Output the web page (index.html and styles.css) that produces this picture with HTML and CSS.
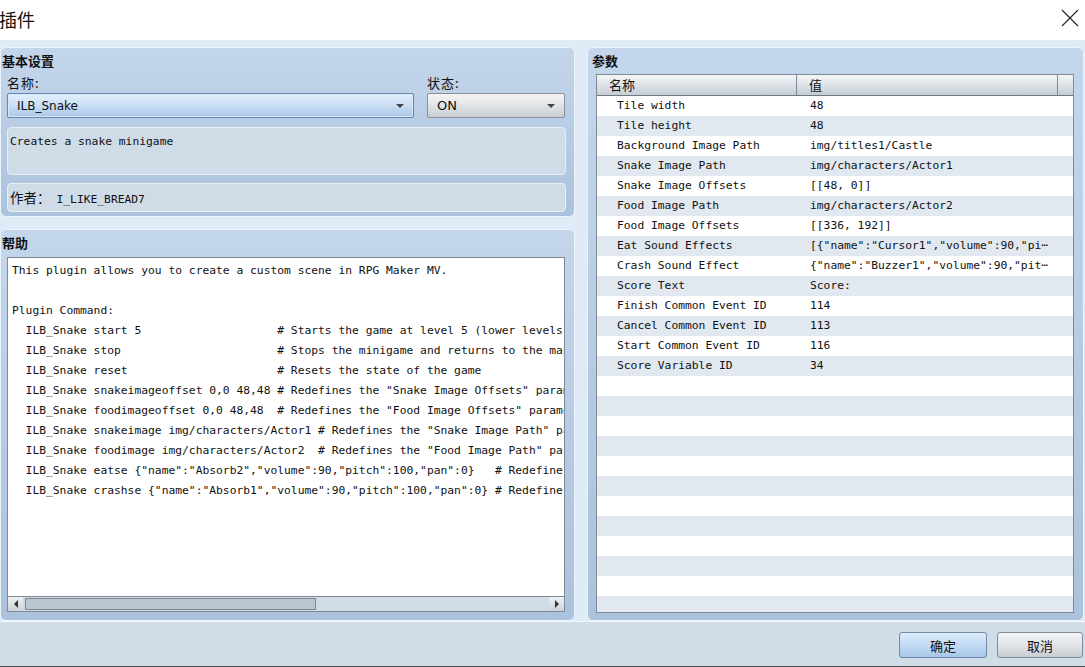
FILE: index.html
```html
<!DOCTYPE html>
<html lang="zh">
<head>
<meta charset="utf-8">
<title>插件</title>
<link rel="stylesheet" href="styles.css">
</head>
<body>
<div class="window">
  <div class="titlebar">
    <span class="title">插件</span>
    <svg class="close" width="18" height="18" viewBox="0 0 18 18"><path d="M1 1 L17 17 M17 1 L1 17" stroke="#222" stroke-width="1.1" fill="none"/></svg>
  </div>
  <div class="main">
    <div class="leftcol">
      <section class="panel basic">
        <div class="ptitle">基本设置</div>
        <div class="fields">
          <div class="field namefield">
            <div class="label">名称:</div>
            <div class="select blue"><span>ILB_Snake</span><i class="arrow"></i></div>
          </div>
          <div class="field statefield">
            <div class="label">状态:</div>
            <div class="select gray"><span>ON</span><i class="arrow"></i></div>
          </div>
        </div>
        <div class="box desc">Creates a snake minigame</div>
        <div class="box author"><span class="cjk">作者：</span>I_LIKE_BREAD7</div>
      </section>
      <section class="panel help">
        <div class="ptitle">帮助</div>
        <div class="textarea">
          <pre class="helptext">This plugin allows you to create a custom scene in RPG Maker MV.

Plugin Command:
  ILB_Snake start 5                    # Starts the game at level 5 (lower levels are faster)
  ILB_Snake stop                       # Stops the minigame and returns to the map
  ILB_Snake reset                      # Resets the state of the game
  ILB_Snake snakeimageoffset 0,0 48,48 # Redefines the "Snake Image Offsets" parameter
  ILB_Snake foodimageoffset 0,0 48,48  # Redefines the "Food Image Offsets" parameter
  ILB_Snake snakeimage img/characters/Actor1 # Redefines the "Snake Image Path" parameter
  ILB_Snake foodimage img/characters/Actor2  # Redefines the "Food Image Path" parameter
  ILB_Snake eatse {"name":"Absorb2","volume":90,"pitch":100,"pan":0}   # Redefines the "Eat Sound Effects" parameter
  ILB_Snake crashse {"name":"Absorb1","volume":90,"pitch":100,"pan":0} # Redefines the "Crash Sound Effect" parameter</pre>
          <div class="hscroll">
            <div class="sbtn"><svg width="6" height="8" viewBox="0 0 6 8"><path d="M5 0 L1 4 L5 8 Z" fill="#333"/></svg></div>
            <div class="strack"><div class="thumb"></div></div>
            <div class="sbtn"><svg width="6" height="8" viewBox="0 0 6 8"><path d="M1 0 L5 4 L1 8 Z" fill="#333"/></svg></div>
          </div>
        </div>
      </section>
    </div>
    <section class="panel params">
      <div class="ptitle">参数</div>
      <div class="table">
        <div class="thead">
          <div class="th">名称</div>
          <div class="th">值</div>
          <div class="th"></div>
        </div>
        <div class="tbody">
          <div class="tr"><div>Tile width</div><div>48</div></div>
          <div class="tr"><div>Tile height</div><div>48</div></div>
          <div class="tr"><div>Background Image Path</div><div>img/titles1/Castle</div></div>
          <div class="tr"><div>Snake Image Path</div><div>img/characters/Actor1</div></div>
          <div class="tr"><div>Snake Image Offsets</div><div>[[48, 0]]</div></div>
          <div class="tr"><div>Food Image Path</div><div>img/characters/Actor2</div></div>
          <div class="tr"><div>Food Image Offsets</div><div>[[336, 192]]</div></div>
          <div class="tr"><div>Eat Sound Effects</div><div>[{"name":"Cursor1","volume":90,"pi⋯</div></div>
          <div class="tr"><div>Crash Sound Effect</div><div>{"name":"Buzzer1","volume":90,"pit⋯</div></div>
          <div class="tr"><div>Score Text</div><div>Score:</div></div>
          <div class="tr"><div>Finish Common Event ID</div><div>114</div></div>
          <div class="tr"><div>Cancel Common Event ID</div><div>113</div></div>
          <div class="tr"><div>Start Common Event ID</div><div>116</div></div>
          <div class="tr"><div>Score Variable ID</div><div>34</div></div>
          <div class="tr"></div><div class="tr"></div><div class="tr"></div><div class="tr"></div>
          <div class="tr"></div><div class="tr"></div><div class="tr"></div><div class="tr"></div>
          <div class="tr"></div><div class="tr"></div><div class="tr"></div><div class="tr"></div>
          <div class="tr"></div><div class="tr"></div>
        </div>
      </div>
    </section>
  </div>
  <div class="footer">
    <button class="btn ok">确定</button>
    <button class="btn cancel">取消</button>
  </div>
</div>
</body>
</html>
```

FILE: styles.css
```css
* { box-sizing: border-box; }
html, body { margin: 0; padding: 0; }
body {
  width: 1085px;
  height: 667px;
  overflow: hidden;
  font-family: "Noto Sans CJK SC", "DejaVu Sans", sans-serif;
  color: #111;
  background: #dfeaf7;
}
.window { display: flex; flex-direction: column; height: 667px; }

.titlebar {
  height: 40px;
  background: #fff;
  display: flex;
  align-items: center;
  justify-content: space-between;
  padding: 0 6px 0 0;
  flex: none;
}
.title { font-size: 18px; margin-left: -1px; margin-top: -3px; color: #111; }
.close { margin-right: 0; margin-top: -4px; }

.main {
  flex: none;
  height: 581px;
  display: flex;
  gap: 12px;
  padding: 7px 1px 0 0;
  background: #dfeaf7;
}
.leftcol { width: 575px; display: flex; flex-direction: column; gap: 12px; }

.panel {
  background: linear-gradient(#c4d6eb, #abc2dc);
  border: 1px solid #edf3fa;
  border-radius: 6px;
  display: flex;
  flex-direction: column;
}
.basic { height: 170px; padding: 0 8px 0 6px; }
.help { height: 392px; padding: 0 9px 8px 6px; }
.params { flex: 1; height: 574px; padding: 0 8px 7px 8px; }

.ptitle {
  font-weight: bold;
  font-size: 13px;
  height: 26px;
  line-height: 26px;
  margin-left: -5px;
  flex: none;
}
.params .ptitle { margin-left: -4px; }

.fields { display: flex; gap: 13px; }
.field { display: flex; flex-direction: column; }
.namefield { width: 407px; }
.statefield { width: 138px; }
.label { font-size: 13px; height: 19px; line-height: 18px; padding-left: 0; letter-spacing: 1px; }
.select {
  height: 25px;
  border-radius: 2px;
  display: flex;
  align-items: center;
  justify-content: space-between;
  padding: 0 9px 0 9px;
  font-family: "DejaVu Sans", sans-serif;
  font-size: 12px;
}
.select.blue {
  background: linear-gradient(#e4f0fc, #c9def3 50%, #a9c7e8);
  border: 1px solid #6587ad;
  box-shadow: inset 0 0 0 1px #d8e8f8;
}
.select.gray {
  background: linear-gradient(#f4f4f5, #e1e3e6 50%, #c9cdd2);
  border: 1px solid #8a9099;
  font-size: 13px;
}
.arrow {
  width: 0; height: 0;
  border-left: 4px solid transparent;
  border-right: 4px solid transparent;
  border-top: 4px solid #444;
  margin-top: 1px;
}

.box {
  background: #cfdbe7;
  border: 1px solid #e7eef6;
  border-radius: 4px;
  font-family: "DejaVu Sans Mono", "Noto Sans CJK SC", monospace;
  font-size: 11.3px;
  padding: 4px 2px;
  line-height: 20px;
}
.desc { height: 48px; margin-top: 9px; }
.author { height: 29px; margin-top: 8px; padding-top: 3px; }
.cjk { font-family: "Noto Sans CJK SC", sans-serif; font-size: 13.5px; margin-right: 6px; display: inline-block; }

.textarea {
  flex: 1;
  background: #fff;
  border: 1px solid #808a96;
  display: flex;
  flex-direction: column;
  overflow: hidden;
  margin-top: 1px;
}
.helptext {
  flex: 1;
  margin: 0;
  padding: 3px 0 0 4px;
  font-family: "DejaVu Sans Mono", monospace;
  font-size: 11.3px;
  line-height: 20px;
  overflow: hidden;
  white-space: pre;
  color: #111;
}
.hscroll {
  height: 15px;
  flex: none;
  background: #cfdbe7;
  border-top: 1px solid #808a96;
  display: flex;
  align-items: stretch;
}
.sbtn {
  width: 15px;
  background: linear-gradient(#f0f2f4, #ccd2d8);
  display: flex;
  align-items: center;
  justify-content: center;
}
.strack { flex: 1; padding: 1px 2px; }
.thumb {
  width: 291px;
  height: 100%;
  background: #bcc6d0;
  border: 1px solid #7b8794;
}

.table {
  flex: 1;
  background: #fff;
  border: 1px solid #7f8a96;
  display: flex;
  flex-direction: column;
  overflow: hidden;
  margin-right: 1px;
}
.thead {
  height: 21px;
  flex: none;
  display: grid;
  grid-template-columns: 200px 261px 1fr;
  background: linear-gradient(#f4f5f7, #dde1e6 55%, #c6ccd4);
  border-bottom: 1px solid #6e7883;
}
.th {
  font-size: 13px;
  line-height: 19px;
  padding-left: 12px;
  border-right: 1px solid #7f8a96;
}
.th:last-child { border-right: none; }
.tbody { flex: 1; overflow: hidden; }
.tr {
  height: 20px;
  display: grid;
  grid-template-columns: 200px 1fr;
  font-family: "DejaVu Sans Mono", monospace;
  font-size: 11.3px;
  line-height: 20px;
  white-space: nowrap;
}
.tr:nth-child(even) { background: #e2e8ef; }
.tr > div:first-child { padding-left: 20px; overflow: hidden; }
.tr > div:last-child { padding-left: 13px; overflow: hidden; }

.footer {
  flex: 1;
  background: #d0dce8;
  border-top: 1px solid #f4f8fc;
  border-bottom: 1px solid #4b5159;
  display: flex;
  justify-content: flex-end;
  align-items: flex-start;
  gap: 10px;
  padding: 10px 2px 0 0;
}
.btn {
  height: 26px;
  border-radius: 3px;
  font-family: "Noto Sans CJK SC", sans-serif;
  font-size: 13px;
  color: #111;
  padding: 0;
}
.btn.ok {
  width: 88px;
  background: linear-gradient(#dcecfb, #c2daf2 50%, #a6c6e8);
  border: 1px solid #6f8aa8;
}
.btn.cancel {
  width: 86px;
  background: linear-gradient(#f5f6f7, #e0e3e7 50%, #c8cdd3);
  border: 1px solid #858c95;
}
```
